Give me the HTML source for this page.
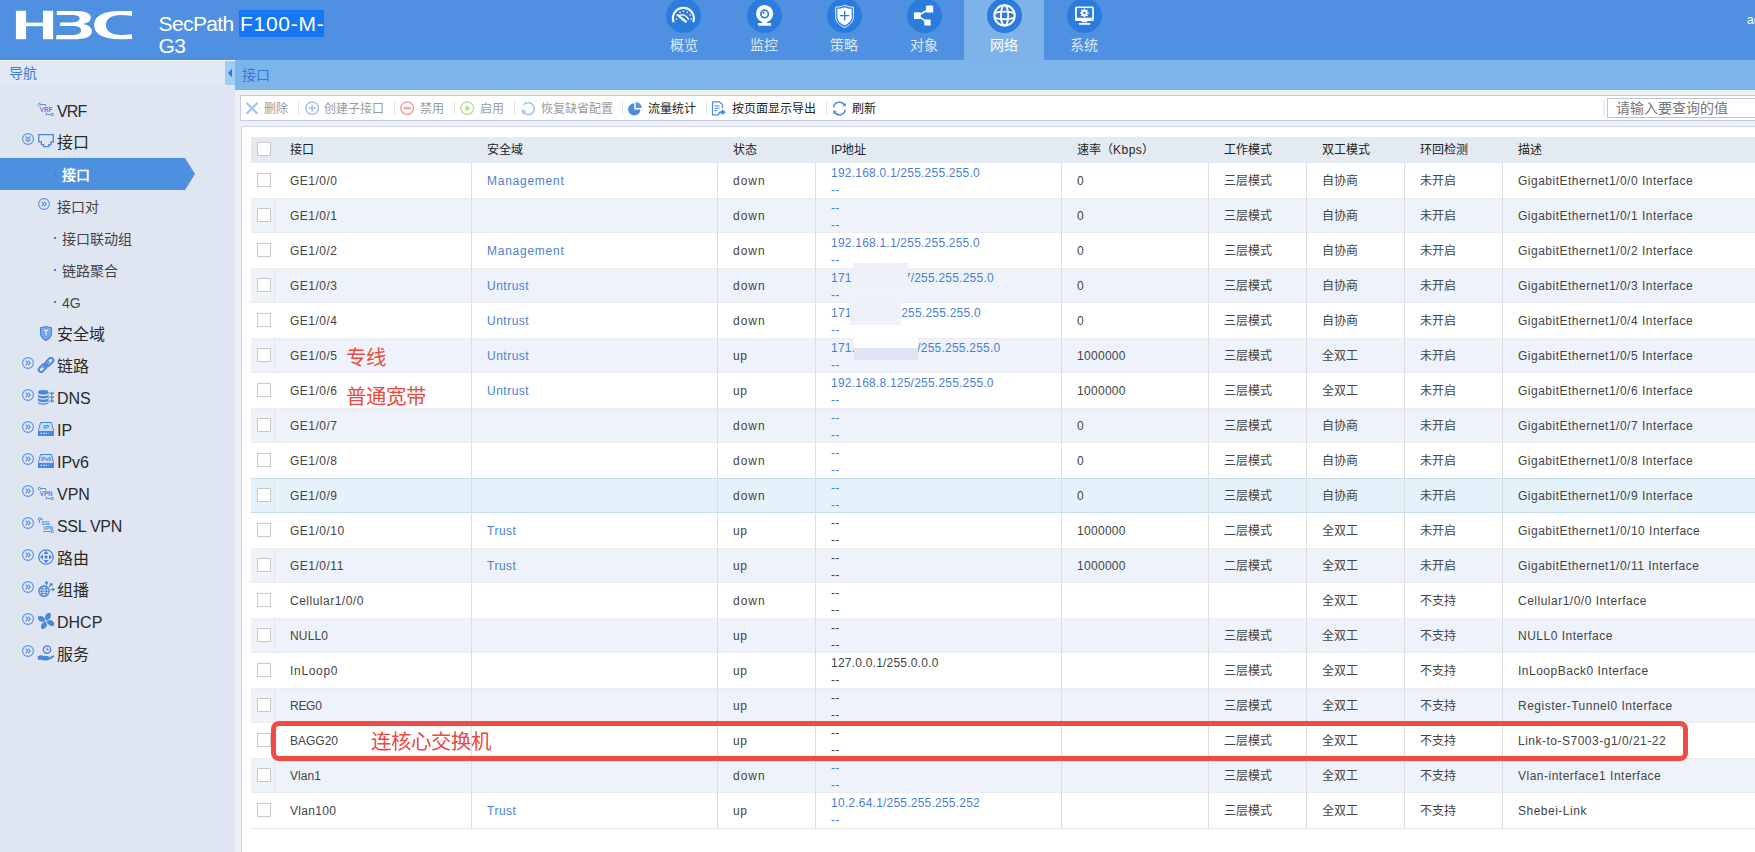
<!DOCTYPE html>
<html lang="zh-CN"><head><meta charset="utf-8"><title>H3C SecPath</title>
<style>
*{box-sizing:border-box;margin:0;padding:0}
html,body{width:1755px;height:852px;overflow:hidden}
body{position:relative;background:#eef0f6;font-family:"Liberation Sans",sans-serif;font-size:12px;color:#444}
.abs{position:absolute}
#hdr{position:absolute;left:0;top:0;width:1755px;height:60px;background:#4f91e0}
#title{position:absolute;left:158.500px;top:12.500px;font-size:21px;line-height:22px;color:#fff;white-space:pre;letter-spacing:-.6px}
#selbg{position:absolute;left:239px;top:10px;width:85px;height:27px;background:#1677f2}
#title .sel{letter-spacing:.75px;margin-left:1px}
.tab{position:absolute;top:0;width:80px;height:60px}
.tab.on{background:#7eb3ea}
.tab .c{position:absolute;left:22.5px;top:-2px;width:35px;height:35px;border-radius:50%;background:#2b7cdc}
.tab .l{position:absolute;left:0;width:80px;top:37px;text-align:center;font-size:14px;line-height:16px;color:#dbe7f8}
.tab.on .l{color:#fff}
#side{position:absolute;left:0;top:60px;width:235px;height:792px;background:#dfe6f2}
#sidehd{position:absolute;left:0;top:0;width:235px;height:26px;background:#e1e9f6;border-top:1px solid #f4f7fc}
#sidehd span{position:absolute;left:9px;top:4px;font-size:14px;line-height:16px;color:#3c7bd6}
#collapse{position:absolute;left:225px;top:61px;width:10px;height:24px;background:#9fcdf3}
#subbar{position:absolute;left:235px;top:60px;width:1520px;height:30px;background:#7cb5ea}
#subbar span{position:absolute;left:7px;top:7px;font-size:14px;line-height:16px;color:#3a78d6}
.nv{position:absolute;left:0;width:235px;height:32px;font-size:16px;line-height:32px;color:#2a2a2a;white-space:pre}
.nv .t{position:absolute;left:57px;top:1px}
.nv.s{font-size:14px;color:#444}
.nv.s .t{left:62px;top:.500px}
.nv.s .d{position:absolute;left:54px;top:15px;width:2px;height:2px;background:#3a80e0}
.nv .e{position:absolute;left:22px;top:7px;width:12px;height:12px}
.nv .i{position:absolute;left:37px;top:7px;width:18px;height:16px}
#selnv{position:absolute;left:0;top:98px;width:185px;height:32px;background:#4e90e0}
#selnv:after{content:"";position:absolute;left:185px;top:0;border-left:10px solid #4e90e0;border-top:16px solid transparent;border-bottom:16px solid transparent}
#tb{position:absolute;left:240px;top:95px;width:1600px;height:26px;background:#fff;border:1px solid #c6cdea}
.tbi{position:absolute;top:5.500px;font-size:12px;line-height:14px;color:#9b9b9b;white-space:pre}
.tbi.k{color:#222}
.tbs{position:absolute;top:5px;width:1px;height:14px;background:#e4e4e6}
.tbic{position:absolute;top:4.800px;width:15px;height:15px}
#srch{position:absolute;left:1607px;top:98px;width:200px;height:20px;background:#fff;border:1px solid #b9c4e2}
#srch span{position:absolute;left:8px;top:1px;font-size:14px;line-height:16px;color:#777}
#panel{position:absolute;left:241px;top:126px;width:1600px;height:760px;background:#fff;border:1px solid #cdd3ea}
#thead{position:absolute;left:251px;top:137px;width:1504px;height:26px;background:#e4eaf2}
.th{position:absolute;top:5px;font-size:12px;line-height:16px;color:#222;white-space:pre}
.row{position:absolute;left:251px;width:1504px;height:35px}
.row.a{background:#eef2fa;border-top:1px solid #ececf0;border-bottom:1px solid #ececf0}
.row.h{background:#e6f2fa;border-top:1px solid #c9dcea;border-bottom:1px solid #c9dcea}
.cb{position:absolute;left:257px;width:14px;height:14px;background:#fff;border:1px solid #c9c9c9}
.td{position:absolute;font-size:12px;line-height:16px;white-space:pre;letter-spacing:.5px;color:#444}
.td.n{letter-spacing:.3px}
.td.ip{letter-spacing:.22px;line-height:17px}
.lk{color:#4a7fd6}
.cj{letter-spacing:0}
.vs{position:absolute;top:163px;width:1px;height:665px;background:#dedede}
.vs0{position:absolute;left:274px;width:1px;height:33px;background:#e6e6e8}
.red{position:absolute;color:#ea4a40;font-size:20.400px;line-height:24px;white-space:pre}
#redbox{position:absolute;left:271px;top:721px;width:1416.500px;height:40.200px;border:5px solid #f24a45;border-radius:8px}
.smg{position:absolute}
</style></head>
<body>
<div id="hdr">
<svg class="abs" style="left:10px;top:5px" width="130" height="40" viewBox="0 0 1755 540"><g fill="#fff"><rect x="80" y="78" width="137" height="384"/><rect x="445" y="78" width="137" height="384"/><rect x="210" y="238" width="240" height="48"/><path d="M632,80 L900,80 C1040,80 1092,120 1092,170 C1092,215 1050,245 985,258 C1060,270 1105,305 1105,355 C1105,420 1040,462 890,462 L622,462 L628,405 L830,405 C920,405 960,385 960,345 C960,305 920,285 840,285 L675,285 L680,235 L830,235 C905,235 940,215 940,180 C940,148 905,135 830,135 L632,135 Z"/><path d="M1648,80 L1648,150 C1600,140 1550,135 1500,135 C1370,135 1295,185 1295,270 C1295,355 1370,405 1500,405 C1550,405 1600,400 1648,395 L1648,460 C1600,462 1540,462 1480,462 C1260,462 1135,390 1135,270 C1135,150 1260,80 1480,80 Z"/></g></svg>
<div id="selbg"></div><div id="title">SecPath <span class="sel">F100-M-</span>
G3</div>
<div class="tab" style="left:644px"><div class="c" style="left:21.5px"><svg width="35" height="35" viewBox="0 0 35 35"><path d="M7.600,24.100 A10.500,10.500 0 1 1 27.200,24.100" fill="none" stroke="#fff" stroke-width="2.100"/><g fill="#fff"><circle cx="10.400" cy="21.100" r=".800"/><circle cx="11.200" cy="17" r=".800"/><circle cx="14" cy="14.200" r=".800"/><circle cx="17.600" cy="13.300" r=".800"/><circle cx="21.400" cy="14.200" r=".800"/><circle cx="24.200" cy="17" r=".800"/><circle cx="25.100" cy="21.100" r=".800"/></g><path d="M12.300,17.600 L19.800,23.600" stroke="#fff" stroke-width="2.300" stroke-linecap="round"/><path d="M12.500,17.400 Q19.500,15.200 22.600,21.400" fill="none" stroke="#fff" stroke-width="1.200" stroke-linecap="round"/></svg></div><div class="l">概览</div></div>
<div class="tab" style="left:724px"><div class="c"><svg width="35" height="35" viewBox="0 0 35 35"><circle cx="17.600" cy="15.700" r="8.600" fill="#fff"/><circle cx="17.600" cy="15.900" r="4.600" fill="#2b7cdc"/><circle cx="17.600" cy="15.900" r="2.900" fill="#fff"/><circle cx="16.500" cy="14.800" r="1.100" fill="#2b7cdc"/><path d="M15.200,23.500 h4.800 v2 h-4.800z M11.100,25.100 h12.900 v2.700 h-12.900z" fill="#fff"/></svg></div><div class="l">监控</div></div>
<div class="tab" style="left:804px"><div class="c"><svg width="35" height="35" viewBox="0 0 35 35"><path d="M17.600,7.200 C14.500,8.600 11.500,9.100 8.700,9.200 V19 C8.700,24 13,27.500 17.600,29.600 C22.200,27.500 26.400,24 26.400,19 V9.200 C23.600,9.100 20.600,8.600 17.600,7.200 Z" fill="none" stroke="#fff" stroke-width=".900"/><path d="M17.600,9.200 C15,10.300 12.500,10.700 10.400,10.800 V19 C10.400,22.800 13.800,25.800 17.600,27.600 C21.400,25.800 24.700,22.800 24.700,19 V10.800 C22.600,10.700 20.100,10.300 17.600,9.200 Z" fill="#fff"/><path d="M13,17.600 h9.300 M17.650,13.100 v9.300" stroke="#2b7cdc" stroke-width="1.400"/></svg></div><div class="l">策略</div></div>
<div class="tab" style="left:884px"><div class="c"><svg width="35" height="35" viewBox="0 0 35 35"><path d="M10.300,17.700 L22.600,11 M10.300,17.700 L20.600,24.400" stroke="#fff" stroke-width="1.600"/><rect x="19.100" y="7.600" width="7.100" height="7" rx="1.200" fill="#fff"/><rect x="6.900" y="14.200" width="6.800" height="6.900" rx="1.200" fill="#fff"/><rect x="17.300" y="21.400" width="6.400" height="6.200" rx="1.200" fill="#fff"/></svg></div><div class="l">对象</div></div>
<div class="tab on" style="left:964px"><div class="c"><svg width="35" height="35" viewBox="0 0 35 35"><g fill="none" stroke="#fff" stroke-width="1.900"><circle cx="17.550" cy="17.450" r="10.150" stroke-width="2.100"/><ellipse cx="17.550" cy="17.450" rx="3.700" ry="10.150"/><path d="M7.700,15 Q17.550,12.300 27.400,15 M7.700,19.900 Q17.550,22.600 27.400,19.900"/></g></svg></div><div class="l">网络</div></div>
<div class="tab" style="left:1044px"><div class="c"><svg width="35" height="35" viewBox="0 0 35 35"><rect x="8" y="8.500" width="18.900" height="14.600" rx="1.600" fill="#fff"/><rect x="9.900" y="10.100" width="15.300" height="9.700" fill="#2b7cdc"/><circle cx="17.400" cy="15" r="3" fill="#fff"/><g stroke="#fff" stroke-width="1.700"><path d="M17.400,10.700 v8.600 M13.100,15 h8.600 M14.400,12 l6,6 M20.400,12 l-6,6"/></g><circle cx="17.400" cy="15" r="1.300" fill="#2b7cdc"/><circle cx="24.800" cy="21.500" r=".500" fill="#2b7cdc"/><path d="M14.300,23.100 h6.200 l-.800,1.200 h-4.600z M11.900,25.100 h11.300 v1.600 h-11.300z" fill="#fff"/></svg></div><div class="l">系统</div></div>
<div class="abs" style="left:1747px;top:13px;font-size:12px;line-height:14px;color:#fff;white-space:pre">admin</div>
</div>
<div id="side"><div id="sidehd"><span>导航</span></div>
<div id="selnv"></div>
<div class="nv" style="top:34px"><svg class="i" viewBox="0 0 18 16"><g fill="none" stroke="#4a86dc" stroke-width=".900"><circle cx="2.400" cy="3.500" r="1.200"/><path d="M3.600,3.500 H8.600 V5.300 M9.300,11.300 V13.500 H14.100"/><circle cx="15.300" cy="13.500" r="1.200"/></g><text x="2.800" y="11" font-size="6.800" font-family="Liberation Sans,sans-serif" fill="#4a86dc" font-weight="bold" textLength="12.400" lengthAdjust="spacingAndGlyphs">VRF</text></svg><span class="t" style="letter-spacing:-.9px;top:2px">VRF</span></div>
<div class="nv" style="top:66px"><svg class="e" viewBox="0 0 12 12"><circle cx="6" cy="6" r="5.400" fill="none" stroke="#5b93df" stroke-width="1.150"/><path d="M3.600,3.600 L6,5.700 L8.400,3.600 M3.600,6.200 L6,8.300 L8.400,6.200" fill="none" stroke="#5b93df" stroke-width="1.300"/></svg><svg class="i" viewBox="0 0 18 16"><path d="M1.800,1.600 H16.300 V8.900 H14 V11.700 H11.800 V13.600 H6.500 V11.700 H4.400 V8.900 H1.800 Z" fill="none" stroke="#4a86dc" stroke-width="1.300" stroke-linejoin="miter"/></svg><span class="t">接口</span></div>
<div class="nv s" style="top:98px;color:#fff;font-weight:bold"><i class="d" style="background:#3f83de"></i><span class="t">接口</span></div>
<div class="nv s" style="top:130px"><svg class="e" style="left:38px;top:8px" viewBox="0 0 12 12"><circle cx="6" cy="6" r="5.400" fill="none" stroke="#5b93df" stroke-width="1.150"/><path d="M3.700,3.700 L5.700,6 L3.700,8.300 M6.200,3.700 L8.200,6 L6.200,8.300" fill="none" stroke="#5b93df" stroke-width="1.200"/></svg><span class="t" style="left:57px">接口对</span></div>
<div class="nv s" style="top:162px"><i class="d"></i><span class="t">接口联动组</span></div>
<div class="nv s" style="top:194px"><i class="d"></i><span class="t">链路聚合</span></div>
<div class="nv s" style="top:226px"><i class="d"></i><span class="t">4G</span></div>
<div class="nv" style="top:258px"><svg class="i" viewBox="0 0 18 16"><path d="M9,0.800 C7,1.700 5,2.100 3,2.200 V8.500 C3,12 6,14.600 9,16 C12,14.600 15,12 15,8.500 V2.200 C13,2.100 11,1.700 9,0.800 Z" fill="#4a86dc"/><path d="M9,2.600 C7.500,3.200 6,3.500 4.700,3.600 V8.500 C4.700,11 6.800,12.900 9,14 C11.200,12.900 13.300,11 13.300,8.500 V3.600 C12,3.500 10.500,3.200 9,2.600 Z" fill="#6ea4ea" stroke="#a9c9f3" stroke-width=".600"/><path d="M6.800,5.400 h4.400 M9,5.400 v5" stroke="#e8f1fc" stroke-width="1.200"/></svg><span class="t">安全域</span></div>
<div class="nv" style="top:290px"><svg class="e" viewBox="0 0 12 12"><circle cx="6" cy="6" r="5.400" fill="none" stroke="#5b93df" stroke-width="1.150"/><path d="M3.700,3.700 L5.700,6 L3.700,8.300 M6.200,3.700 L8.200,6 L6.200,8.300" fill="none" stroke="#5b93df" stroke-width="1.200"/></svg><svg class="i" viewBox="0 0 18 16"><g fill="none" stroke="#4a86dc" stroke-width="2" stroke-linejoin="round"><rect x="-1.200" y="-2.400" width="9" height="4.800" rx="2.400" transform="translate(5.600,11.200) rotate(-45) translate(-3.300,0)"/><rect x="-1.200" y="-2.400" width="9" height="4.800" rx="2.400" transform="translate(12.400,4.800) rotate(-45) translate(-3.300,0)"/></g><path d="M6.500,10.400 L11.600,5.400" stroke="#4a86dc" stroke-width="2" stroke-linecap="round"/></svg><span class="t">链路</span></div>
<div class="nv" style="top:322px"><svg class="e" viewBox="0 0 12 12"><circle cx="6" cy="6" r="5.400" fill="none" stroke="#5b93df" stroke-width="1.150"/><path d="M3.700,3.700 L5.700,6 L3.700,8.300 M6.200,3.700 L8.200,6 L6.200,8.300" fill="none" stroke="#5b93df" stroke-width="1.200"/></svg><svg class="i" viewBox="0 0 18 16"><g fill="#4a86dc"><ellipse cx="6.300" cy="3.300" rx="5.300" ry="2.300"/><path d="M1,4.900 c0,3 10.600,3 10.600,0 v2.300 c0,3 -10.600,3 -10.600,0z M1,8.600 c0,3 10.600,3 10.600,0 v2.300 c0,3 -10.600,3 -10.600,0z M1,12.300 c0,3 10.600,3 10.600,0 v1.300 c0,3 -10.600,3 -10.600,0z"/></g><g stroke="#4a86dc" stroke-width="1" fill="none"><path d="M11.600,4.300 H16.800 M11.600,8.200 H16.800 M11.600,12.100 H16.800 M14.600,3 V13.400"/><path d="M15.600,3.200 L16.900,4.300 L15.600,5.400 M15.600,7.100 L16.900,8.200 L15.600,9.300 M15.600,11 L16.900,12.100 L15.600,13.200"/></g></svg><span class="t">DNS</span></div>
<div class="nv" style="top:354px"><svg class="e" viewBox="0 0 12 12"><circle cx="6" cy="6" r="5.400" fill="none" stroke="#5b93df" stroke-width="1.150"/><path d="M3.700,3.700 L5.700,6 L3.700,8.300 M6.200,3.700 L8.200,6 L6.200,8.300" fill="none" stroke="#5b93df" stroke-width="1.200"/></svg><svg class="i" viewBox="0 0 18 16"><path d="M3.500,1.500 H14.500 L16.500,9.500 V14.500 H1.500 V9.500 Z" fill="#c9dcf5" stroke="#4a86dc" stroke-width="1"/><rect x="1.500" y="10" width="15" height="4.500" fill="#4a86dc"/><path d="M3.500,12.300 h8" stroke="#fff" stroke-width="1" stroke-dasharray="1.500,1"/><text x="6.300" y="8" font-size="6" font-weight="bold" font-family="Liberation Sans,sans-serif" fill="#4a86dc">IP</text></svg><span class="t">IP</span></div>
<div class="nv" style="top:386px"><svg class="e" viewBox="0 0 12 12"><circle cx="6" cy="6" r="5.400" fill="none" stroke="#5b93df" stroke-width="1.150"/><path d="M3.700,3.700 L5.700,6 L3.700,8.300 M6.200,3.700 L8.200,6 L6.200,8.300" fill="none" stroke="#5b93df" stroke-width="1.200"/></svg><svg class="i" viewBox="0 0 18 16"><path d="M3.500,1.500 H14.500 L16.500,9.500 V14.500 H1.500 V9.500 Z" fill="#c9dcf5" stroke="#4a86dc" stroke-width="1"/><rect x="1.500" y="10" width="15" height="4.500" fill="#4a86dc"/><path d="M3.500,12.300 h8" stroke="#fff" stroke-width="1" stroke-dasharray="1.500,1"/><text x="4" y="8" font-size="5" font-weight="bold" font-family="Liberation Sans,sans-serif" fill="#4a86dc" textLength="10">IPv6</text></svg><span class="t">IPv6</span></div>
<div class="nv" style="top:418px"><svg class="e" viewBox="0 0 12 12"><circle cx="6" cy="6" r="5.400" fill="none" stroke="#5b93df" stroke-width="1.150"/><path d="M3.700,3.700 L5.700,6 L3.700,8.300 M6.200,3.700 L8.200,6 L6.200,8.300" fill="none" stroke="#5b93df" stroke-width="1.200"/></svg><svg class="i" viewBox="0 0 18 16"><g fill="none" stroke="#4a86dc" stroke-width=".900"><circle cx="2.400" cy="3.500" r="1.200"/><path d="M3.600,3.500 H8.600 V5.300 M9.300,11.300 V13.500 H14.100"/><circle cx="15.300" cy="13.500" r="1.200"/></g><text x="2.800" y="11" font-size="6.800" font-family="Liberation Sans,sans-serif" fill="#4a86dc" font-weight="bold" textLength="12.600" lengthAdjust="spacingAndGlyphs">VPN</text></svg><span class="t">VPN</span></div>
<div class="nv" style="top:450px"><svg class="e" viewBox="0 0 12 12"><circle cx="6" cy="6" r="5.400" fill="none" stroke="#5b93df" stroke-width="1.150"/><path d="M3.700,3.700 L5.700,6 L3.700,8.300 M6.200,3.700 L8.200,6 L6.200,8.300" fill="none" stroke="#5b93df" stroke-width="1.200"/></svg><svg class="i" viewBox="0 0 18 16"><g fill="none" stroke="#4a86dc" stroke-width=".900"><circle cx="2.400" cy="2" r="1.200"/><path d="M3.600,2 H6 M2.400,3.200 V6 M6,14.500 H14.100"/><circle cx="15.300" cy="14.500" r="1.200"/></g><text x="4.600" y="7.800" font-size="5.600" font-family="Liberation Sans,sans-serif" fill="#4a86dc" font-weight="bold" textLength="9" lengthAdjust="spacingAndGlyphs">SSL</text><text x="6.200" y="13" font-size="5.600" font-family="Liberation Sans,sans-serif" fill="#4a86dc" font-weight="bold" textLength="9.600" lengthAdjust="spacingAndGlyphs">VPN</text></svg><span class="t" style="letter-spacing:-.3px">SSL VPN</span></div>
<div class="nv" style="top:482px"><svg class="e" viewBox="0 0 12 12"><circle cx="6" cy="6" r="5.400" fill="none" stroke="#5b93df" stroke-width="1.150"/><path d="M3.700,3.700 L5.700,6 L3.700,8.300 M6.200,3.700 L8.200,6 L6.200,8.300" fill="none" stroke="#5b93df" stroke-width="1.200"/></svg><svg class="i" viewBox="0 0 18 16"><circle cx="9" cy="8" r="7.200" fill="none" stroke="#4a86dc" stroke-width="1.200"/><g fill="#4a86dc"><path d="M9,1.800 L11.600,5 H6.400 Z M9,14.200 L11.600,11 H6.400 Z M2.800,8 L6,5.400 V10.600 Z M15.200,8 L12,5.400 V10.600 Z"/><path d="M9,6 L11,8 L9,10 L7,8 Z"/></g></svg><span class="t">路由</span></div>
<div class="nv" style="top:514px"><svg class="e" viewBox="0 0 12 12"><circle cx="6" cy="6" r="5.400" fill="none" stroke="#5b93df" stroke-width="1.150"/><path d="M3.700,3.700 L5.700,6 L3.700,8.300 M6.200,3.700 L8.200,6 L6.200,8.300" fill="none" stroke="#5b93df" stroke-width="1.200"/></svg><svg class="i" viewBox="0 0 18 16"><circle cx="7" cy="10.200" r="5.200" fill="none" stroke="#4a86dc" stroke-width="1.300"/><g fill="none" stroke="#4a86dc" stroke-width="1"><ellipse cx="7" cy="10.200" rx="2.300" ry="5.200"/><path d="M1.800,10.200 h10.400 M3,7.300 Q7,9 11,7.300 M3,13.100 Q7,11.400 11,13.100"/></g><g stroke="#4a86dc" stroke-width="1.200" stroke-linecap="round" fill="#4a86dc"><path d="M9.500,4 V1 M8.500,2 L9.500,0.800 L10.500,2"/><path d="M12.300,5.500 L14.800,3 M13.300,2.800 L15,2.800 L15,4.500"/><path d="M13.800,8.500 H17 M16,7.500 L17.200,8.500 L16,9.500"/></g></svg><span class="t">组播</span></div>
<div class="nv" style="top:546px"><svg class="e" viewBox="0 0 12 12"><circle cx="6" cy="6" r="5.400" fill="none" stroke="#5b93df" stroke-width="1.150"/><path d="M3.700,3.700 L5.700,6 L3.700,8.300 M6.200,3.700 L8.200,6 L6.200,8.300" fill="none" stroke="#5b93df" stroke-width="1.200"/></svg><svg class="i" viewBox="0 0 18 16"><g fill="#4a86dc" transform="translate(9,8) scale(1.180) rotate(12) translate(-9,-8)"><path d="M9,7.500 C6.500,5 7,1.200 11,0.500 C13.300,2.500 12.300,6.200 9,7.500Z"/><path d="M9.500,8 C12,5.500 15.800,6 16.500,10 C14.500,12.300 10.800,11.300 9.500,8Z"/><path d="M9,8.500 C11.500,11 11,14.800 7,15.500 C4.700,13.500 5.700,9.800 9,8.500Z"/><path d="M8.500,8 C6,10.500 2.200,10 1.500,6 C3.500,3.700 7.200,4.700 8.500,8Z"/></g></svg><span class="t">DHCP</span></div>
<div class="nv" style="top:578px"><svg class="e" viewBox="0 0 12 12"><circle cx="6" cy="6" r="5.400" fill="none" stroke="#5b93df" stroke-width="1.150"/><path d="M3.700,3.700 L5.700,6 L3.700,8.300 M6.200,3.700 L8.200,6 L6.200,8.300" fill="none" stroke="#5b93df" stroke-width="1.200"/></svg><svg class="i" viewBox="0 0 18 16"><circle cx="10" cy="4.600" r="3.700" fill="none" stroke="#4a86dc" stroke-width="1.300"/><path d="M10,2.600 V4.800 H11.800" fill="none" stroke="#4a86dc" stroke-width="1.100"/><path d="M0.800,11.200 C3,9.700 5,9.900 7,11 H10.800 C12.300,11 12.300,12.600 10.800,12.700 H8.200 H10.800 C13,12.500 15,10.700 16.600,10.300 C17.600,10.500 17.500,11.600 16.600,12.200 C14,14 11.500,15.400 9,15.400 C6,15.400 4,14.200 0.800,14.800 Z" fill="#4a86dc"/></svg><span class="t">服务</span></div>
</div>
<div id="collapse"><svg class="abs" style="left:2px;top:7px" width="6" height="10" viewBox="0 0 6 10"><path d="M5,0.800 L1,5 L5,9.200 Z" fill="#2f74d8"/></svg></div>
<div id="subbar"><span>接口</span></div>
<div id="tb">
<svg class="tbic" style="left:4px" viewBox="0 0 15 15"><path d="M1.500,1.800 L12.500,12.800 M12.500,1.800 L1.500,12.800" stroke="#a6c7f2" stroke-width="2.300" fill="none"/></svg><span class="tbi" style="left:23px">删除</span><i class="tbs" style="left:56.5px"></i>
<svg class="tbic" style="left:64px" viewBox="0 0 15 15"><circle cx="7.200" cy="7.200" r="6.300" fill="none" stroke="#a6c7f2" stroke-width="1.500"/><path d="M3.700,7.200 h7 M7.200,3.700 v7" stroke="#a6c7f2" stroke-width="1.800"/></svg><span class="tbi" style="left:83px">创建子接口</span><i class="tbs" style="left:152.5px"></i>
<svg class="tbic" style="left:159px" viewBox="0 0 15 15"><circle cx="7.200" cy="7.200" r="6.300" fill="none" stroke="#f8a3a3" stroke-width="1.500"/><path d="M3.600,7.200 h7.200" stroke="#f89a9a" stroke-width="2.200"/></svg><span class="tbi" style="left:179px">禁用</span><i class="tbs" style="left:212.5px"></i>
<svg class="tbic" style="left:219px" viewBox="0 0 15 15"><circle cx="7.200" cy="7.200" r="6.300" fill="none" stroke="#bfe39a" stroke-width="1.500"/><path d="M5.500,3.800 L10.500,7.200 L5.500,10.600 Z" fill="#b4df88"/></svg><span class="tbi" style="left:239px">启用</span><i class="tbs" style="left:272.5px"></i>
<svg class="tbic" style="left:280px" viewBox="0 0 15 15"><path d="M2.200,10.800 A6,6 0 1 0 2.500,4" fill="none" stroke="#a6c7f2" stroke-width="1.700"/><path d="M0.300,8.600 L5.200,9.600 L1.500,13.400 Z" fill="#a6c7f2"/></svg><span class="tbi" style="left:300px">恢复缺省配置</span><i class="tbs" style="left:380.5px"></i>
<svg class="tbic" style="left:387px" viewBox="0 0 15 15"><path d="M6.300,2.200 A6.200,6.200 0 1 0 12.500,8.400 L6.300,8.400 Z" fill="#4b8ce2"/><path d="M7.700,0.900 A6.100,6.100 0 0 1 13.800,7 L7.700,7 Z" fill="#5c98e6"/></svg><span class="tbi k" style="left:407px">流量统计</span><i class="tbs" style="left:464.5px"></i>
<svg class="tbic" style="left:470px" viewBox="0 0 15 15"><path d="M1.500,0.800 H8.500 L11.500,3.800 V7 M8,13.800 H1.500 V0.800" fill="none" stroke="#4b8ce2" stroke-width="1.200"/><path d="M3.500,5 h5 M3.500,7.300 h5 M3.500,9.600 h3" stroke="#4b8ce2" stroke-width="1"/><path d="M7,14.500 C7,11 9,10 11,10 V8 L14.800,11.200 L11,14.300 V12.300 C9.500,12.300 8,12.800 7,14.500 Z" fill="#4b8ce2"/></svg><span class="tbi k" style="left:491px">按页面显示导出</span><i class="tbs" style="left:584.5px"></i>
<svg class="tbic" style="left:591px" viewBox="0 0 15 15"><path d="M1.600,6.300 A6,6 0 0 1 12.600,4 M13.400,8.700 A6,6 0 0 1 2.400,11" fill="none" stroke="#4b8ce2" stroke-width="1.500"/><path d="M13.800,1.800 V5.300 H10.300 Z M1.200,13.200 V9.700 H4.700 Z" fill="#4b8ce2"/></svg><span class="tbi k" style="left:611px">刷新</span><i class="tbs" style="left:1362px;top:4px;height:17px;background:#eceef5;width:2px"></i>
</div>
<div id="srch"><span>请输入要查询的值</span></div>
<div id="panel"></div>
<div id="thead"></div>
<i class="cb" style="top:142px"></i>
<span class="th" style="left:290px;top:142px">接口</span><span class="th" style="left:487px;top:142px">安全域</span><span class="th" style="left:733px;top:142px">状态</span><span class="th" style="left:831px;top:142px">IP地址</span><span class="th" style="left:1077px;top:142px">速率（<span style="letter-spacing:.5px">Kbps</span>）</span><span class="th" style="left:1224px;top:142px">工作模式</span><span class="th" style="left:1322px;top:142px">双工模式</span><span class="th" style="left:1420px;top:142px">环回检测</span><span class="th" style="left:1518px;top:142px">描述</span>
<div class="row" style="top:163px"></div><i class="cb" style="top:173px"></i><span class="td" style="left:290px;top:172.5px">GE1/0/0</span><span class="td lk" style="left:487px;top:172.5px;letter-spacing:0.75px">Management</span><span class="td" style="left:733px;top:172.5px;letter-spacing:1.0px">down</span><span class="td ip lk" style="left:831px;top:165.3px">192.168.0.1/255.255.255.0
--</span><span class="td n" style="left:1077px;top:172.5px">0</span><span class="td cj" style="left:1224px;top:172.5px">三层模式</span><span class="td cj" style="left:1322px;top:172.5px">自协商</span><span class="td cj" style="left:1420px;top:172.5px">未开启</span><span class="td" style="left:1518px;top:172.5px">GigabitEthernet1/0/0 Interface</span>
<div class="row a" style="top:198px"></div><i class="vs0" style="top:199px"></i><i class="cb" style="top:208px"></i><span class="td" style="left:290px;top:207.5px">GE1/0/1</span><span class="td" style="left:733px;top:207.5px;letter-spacing:1.0px">down</span><span class="td ip lk" style="left:831px;top:200.3px">--
--</span><span class="td n" style="left:1077px;top:207.5px">0</span><span class="td cj" style="left:1224px;top:207.5px">三层模式</span><span class="td cj" style="left:1322px;top:207.5px">自协商</span><span class="td cj" style="left:1420px;top:207.5px">未开启</span><span class="td" style="left:1518px;top:207.5px">GigabitEthernet1/0/1 Interface</span>
<div class="row" style="top:233px"></div><i class="cb" style="top:243px"></i><span class="td" style="left:290px;top:242.5px">GE1/0/2</span><span class="td lk" style="left:487px;top:242.5px;letter-spacing:0.75px">Management</span><span class="td" style="left:733px;top:242.5px;letter-spacing:1.0px">down</span><span class="td ip lk" style="left:831px;top:235.3px">192.168.1.1/255.255.255.0
--</span><span class="td n" style="left:1077px;top:242.5px">0</span><span class="td cj" style="left:1224px;top:242.5px">三层模式</span><span class="td cj" style="left:1322px;top:242.5px">自协商</span><span class="td cj" style="left:1420px;top:242.5px">未开启</span><span class="td" style="left:1518px;top:242.5px">GigabitEthernet1/0/2 Interface</span>
<div class="row a" style="top:268px"></div><i class="vs0" style="top:269px"></i><i class="cb" style="top:278px"></i><span class="td" style="left:290px;top:277.5px">GE1/0/3</span><span class="td lk" style="left:487px;top:277.5px;letter-spacing:0.5px">Untrust</span><span class="td" style="left:733px;top:277.5px;letter-spacing:1.0px">down</span><span class="td ip lk" style="left:831px;top:270.3px">171<span style="display:inline-block;width:52.1px"></span>7/255.255.255.0
--</span><span class="td n" style="left:1077px;top:277.5px">0</span><span class="td cj" style="left:1224px;top:277.5px">三层模式</span><span class="td cj" style="left:1322px;top:277.5px">自协商</span><span class="td cj" style="left:1420px;top:277.5px">未开启</span><span class="td" style="left:1518px;top:277.5px">GigabitEthernet1/0/3 Interface</span>
<div class="row" style="top:303px"></div><i class="cb" style="top:313px"></i><span class="td" style="left:290px;top:312.5px">GE1/0/4</span><span class="td lk" style="left:487px;top:312.5px;letter-spacing:0.5px">Untrust</span><span class="td" style="left:733px;top:312.5px;letter-spacing:1.0px">down</span><span class="td ip lk" style="left:831px;top:305.3px">171<span style="display:inline-block;width:49.5px"></span>255.255.255.0
--</span><span class="td n" style="left:1077px;top:312.5px">0</span><span class="td cj" style="left:1224px;top:312.5px">三层模式</span><span class="td cj" style="left:1322px;top:312.5px">自协商</span><span class="td cj" style="left:1420px;top:312.5px">未开启</span><span class="td" style="left:1518px;top:312.5px">GigabitEthernet1/0/4 Interface</span>
<div class="row a" style="top:338px"></div><i class="vs0" style="top:339px"></i><i class="cb" style="top:348px"></i><span class="td" style="left:290px;top:347.5px">GE1/0/5</span><span class="td lk" style="left:487px;top:347.5px;letter-spacing:0.5px">Untrust</span><span class="td" style="left:733px;top:347.5px;letter-spacing:0.7px">up</span><span class="td ip lk" style="left:831px;top:340.3px">171.<span style="display:inline-block;width:62px"></span>/255.255.255.0
--</span><span class="td n" style="left:1077px;top:347.5px">1000000</span><span class="td cj" style="left:1224px;top:347.5px">三层模式</span><span class="td cj" style="left:1322px;top:347.5px">全双工</span><span class="td cj" style="left:1420px;top:347.5px">未开启</span><span class="td" style="left:1518px;top:347.5px">GigabitEthernet1/0/5 Interface</span>
<div class="row" style="top:373px"></div><i class="cb" style="top:383px"></i><span class="td" style="left:290px;top:382.5px">GE1/0/6</span><span class="td lk" style="left:487px;top:382.5px;letter-spacing:0.5px">Untrust</span><span class="td" style="left:733px;top:382.5px;letter-spacing:0.7px">up</span><span class="td ip lk" style="left:831px;top:375.3px">192.168.8.125/255.255.255.0
--</span><span class="td n" style="left:1077px;top:382.5px">1000000</span><span class="td cj" style="left:1224px;top:382.5px">三层模式</span><span class="td cj" style="left:1322px;top:382.5px">全双工</span><span class="td cj" style="left:1420px;top:382.5px">未开启</span><span class="td" style="left:1518px;top:382.5px">GigabitEthernet1/0/6 Interface</span>
<div class="row a" style="top:408px"></div><i class="vs0" style="top:409px"></i><i class="cb" style="top:418px"></i><span class="td" style="left:290px;top:417.5px">GE1/0/7</span><span class="td" style="left:733px;top:417.5px;letter-spacing:1.0px">down</span><span class="td ip lk" style="left:831px;top:410.3px">--
--</span><span class="td n" style="left:1077px;top:417.5px">0</span><span class="td cj" style="left:1224px;top:417.5px">三层模式</span><span class="td cj" style="left:1322px;top:417.5px">自协商</span><span class="td cj" style="left:1420px;top:417.5px">未开启</span><span class="td" style="left:1518px;top:417.5px">GigabitEthernet1/0/7 Interface</span>
<div class="row" style="top:443px"></div><i class="cb" style="top:453px"></i><span class="td" style="left:290px;top:452.5px">GE1/0/8</span><span class="td" style="left:733px;top:452.5px;letter-spacing:1.0px">down</span><span class="td ip lk" style="left:831px;top:445.3px">--
--</span><span class="td n" style="left:1077px;top:452.5px">0</span><span class="td cj" style="left:1224px;top:452.5px">三层模式</span><span class="td cj" style="left:1322px;top:452.5px">自协商</span><span class="td cj" style="left:1420px;top:452.5px">未开启</span><span class="td" style="left:1518px;top:452.5px">GigabitEthernet1/0/8 Interface</span>
<div class="row h" style="top:478px"></div><i class="vs0" style="top:479px"></i><i class="cb" style="top:488px"></i><span class="td" style="left:290px;top:487.5px">GE1/0/9</span><span class="td" style="left:733px;top:487.5px;letter-spacing:1.0px">down</span><span class="td ip lk" style="left:831px;top:480.3px">--
--</span><span class="td n" style="left:1077px;top:487.5px">0</span><span class="td cj" style="left:1224px;top:487.5px">三层模式</span><span class="td cj" style="left:1322px;top:487.5px">自协商</span><span class="td cj" style="left:1420px;top:487.5px">未开启</span><span class="td" style="left:1518px;top:487.5px">GigabitEthernet1/0/9 Interface</span>
<div class="row" style="top:513px"></div><i class="cb" style="top:523px"></i><span class="td" style="left:290px;top:522.5px">GE1/0/10</span><span class="td lk" style="left:487px;top:522.5px;letter-spacing:0.5px">Trust</span><span class="td" style="left:733px;top:522.5px;letter-spacing:0.7px">up</span><span class="td ip" style="left:831px;top:515.3px">--
--</span><span class="td n" style="left:1077px;top:522.5px">1000000</span><span class="td cj" style="left:1224px;top:522.5px">二层模式</span><span class="td cj" style="left:1322px;top:522.5px">全双工</span><span class="td cj" style="left:1420px;top:522.5px">未开启</span><span class="td" style="left:1518px;top:522.5px">GigabitEthernet1/0/10 Interface</span>
<div class="row a" style="top:548px"></div><i class="vs0" style="top:549px"></i><i class="cb" style="top:558px"></i><span class="td" style="left:290px;top:557.5px">GE1/0/11</span><span class="td lk" style="left:487px;top:557.5px;letter-spacing:0.5px">Trust</span><span class="td" style="left:733px;top:557.5px;letter-spacing:0.7px">up</span><span class="td ip" style="left:831px;top:550.3px">--
--</span><span class="td n" style="left:1077px;top:557.5px">1000000</span><span class="td cj" style="left:1224px;top:557.5px">二层模式</span><span class="td cj" style="left:1322px;top:557.5px">全双工</span><span class="td cj" style="left:1420px;top:557.5px">未开启</span><span class="td" style="left:1518px;top:557.5px">GigabitEthernet1/0/11 Interface</span>
<div class="row" style="top:583px"></div><i class="cb" style="top:593px"></i><span class="td" style="left:290px;top:592.5px">Cellular1/0/0</span><span class="td" style="left:733px;top:592.5px;letter-spacing:1.0px">down</span><span class="td ip" style="left:831px;top:585.3px">--
--</span><span class="td cj" style="left:1322px;top:592.5px">全双工</span><span class="td cj" style="left:1420px;top:592.5px">不支持</span><span class="td" style="left:1518px;top:592.5px">Cellular1/0/0 Interface</span>
<div class="row a" style="top:618px"></div><i class="vs0" style="top:619px"></i><i class="cb" style="top:628px"></i><span class="td" style="left:290px;top:627.5px;letter-spacing:0.16px">NULL0</span><span class="td" style="left:733px;top:627.5px;letter-spacing:0.7px">up</span><span class="td ip" style="left:831px;top:620.3px">--
--</span><span class="td cj" style="left:1224px;top:627.5px">三层模式</span><span class="td cj" style="left:1322px;top:627.5px">全双工</span><span class="td cj" style="left:1420px;top:627.5px">不支持</span><span class="td" style="left:1518px;top:627.5px">NULL0 Interface</span>
<div class="row" style="top:653px"></div><i class="cb" style="top:663px"></i><span class="td" style="left:290px;top:662.5px;letter-spacing:0.69px">InLoop0</span><span class="td" style="left:733px;top:662.5px;letter-spacing:0.7px">up</span><span class="td ip" style="left:831px;top:655.3px">127.0.0.1/255.0.0.0
--</span><span class="td cj" style="left:1224px;top:662.5px">三层模式</span><span class="td cj" style="left:1322px;top:662.5px">全双工</span><span class="td cj" style="left:1420px;top:662.5px">不支持</span><span class="td" style="left:1518px;top:662.5px">InLoopBack0 Interface</span>
<div class="row a" style="top:688px"></div><i class="vs0" style="top:689px"></i><i class="cb" style="top:698px"></i><span class="td" style="left:290px;top:697.5px;letter-spacing:-0.28px">REG0</span><span class="td" style="left:733px;top:697.5px;letter-spacing:0.7px">up</span><span class="td ip" style="left:831px;top:690.3px">--
--</span><span class="td cj" style="left:1224px;top:697.5px">三层模式</span><span class="td cj" style="left:1322px;top:697.5px">全双工</span><span class="td cj" style="left:1420px;top:697.5px">不支持</span><span class="td" style="left:1518px;top:697.5px">Register-Tunnel0 Interface</span>
<div class="row" style="top:723px"></div><i class="cb" style="top:733px"></i><span class="td" style="left:290px;top:732.5px;letter-spacing:0px">BAGG20</span><span class="td" style="left:733px;top:732.5px;letter-spacing:0.7px">up</span><span class="td ip" style="left:831px;top:725.3px">--
--</span><span class="td cj" style="left:1224px;top:732.5px">二层模式</span><span class="td cj" style="left:1322px;top:732.5px">全双工</span><span class="td cj" style="left:1420px;top:732.5px">不支持</span><span class="td" style="left:1518px;top:732.5px">Link-to-S7003-g1/0/21-22</span>
<div class="row a" style="top:758px"></div><i class="vs0" style="top:759px"></i><i class="cb" style="top:768px"></i><span class="td" style="left:290px;top:767.5px;letter-spacing:0.08px">Vlan1</span><span class="td" style="left:733px;top:767.5px;letter-spacing:1.0px">down</span><span class="td ip lk" style="left:831px;top:760.3px">--
--</span><span class="td cj" style="left:1224px;top:767.5px">三层模式</span><span class="td cj" style="left:1322px;top:767.5px">全双工</span><span class="td cj" style="left:1420px;top:767.5px">不支持</span><span class="td" style="left:1518px;top:767.5px">Vlan-interface1 Interface</span>
<div class="row" style="top:793px"></div><i class="cb" style="top:803px"></i><span class="td" style="left:290px;top:802.5px;letter-spacing:0.31px">Vlan100</span><span class="td lk" style="left:487px;top:802.5px;letter-spacing:0.5px">Trust</span><span class="td" style="left:733px;top:802.5px;letter-spacing:0.7px">up</span><span class="td ip lk" style="left:831px;top:795.3px">10.2.64.1/255.255.255.252
--</span><span class="td cj" style="left:1224px;top:802.5px">三层模式</span><span class="td cj" style="left:1322px;top:802.5px">全双工</span><span class="td cj" style="left:1420px;top:802.5px">不支持</span><span class="td" style="left:1518px;top:802.5px">Shebei-Link</span>
<div class="abs" style="left:251px;top:828px;width:1504px;height:1px;background:#e6e6ea"></div>
<i class="vs" style="left:471px"></i><i class="vs" style="left:717px"></i><i class="vs" style="left:815px"></i><i class="vs" style="left:1061px"></i><i class="vs" style="left:1208px"></i><i class="vs" style="left:1306px"></i><i class="vs" style="left:1404px"></i><i class="vs" style="left:1502px"></i>
<i class="smg" style="left:853px;top:263px;width:55px;height:25px;background:#eef1fa"></i><i class="smg" style="left:850px;top:298px;width:51px;height:27px;background:#eef1fa"></i><i class="smg" style="left:854px;top:336px;width:64px;height:12px;background:#fdfdfe"></i><i class="smg" style="left:854px;top:348px;width:64px;height:12px;background:#dfe5f4"></i>
<span class="red" style="left:346.300px;top:346.200px">专线</span><span class="red" style="left:346.300px;top:385px">普通宽带</span><span class="red" style="left:371.300px;top:729.800px">连核心交换机</span>
<div id="redbox"></div>
</body></html>
